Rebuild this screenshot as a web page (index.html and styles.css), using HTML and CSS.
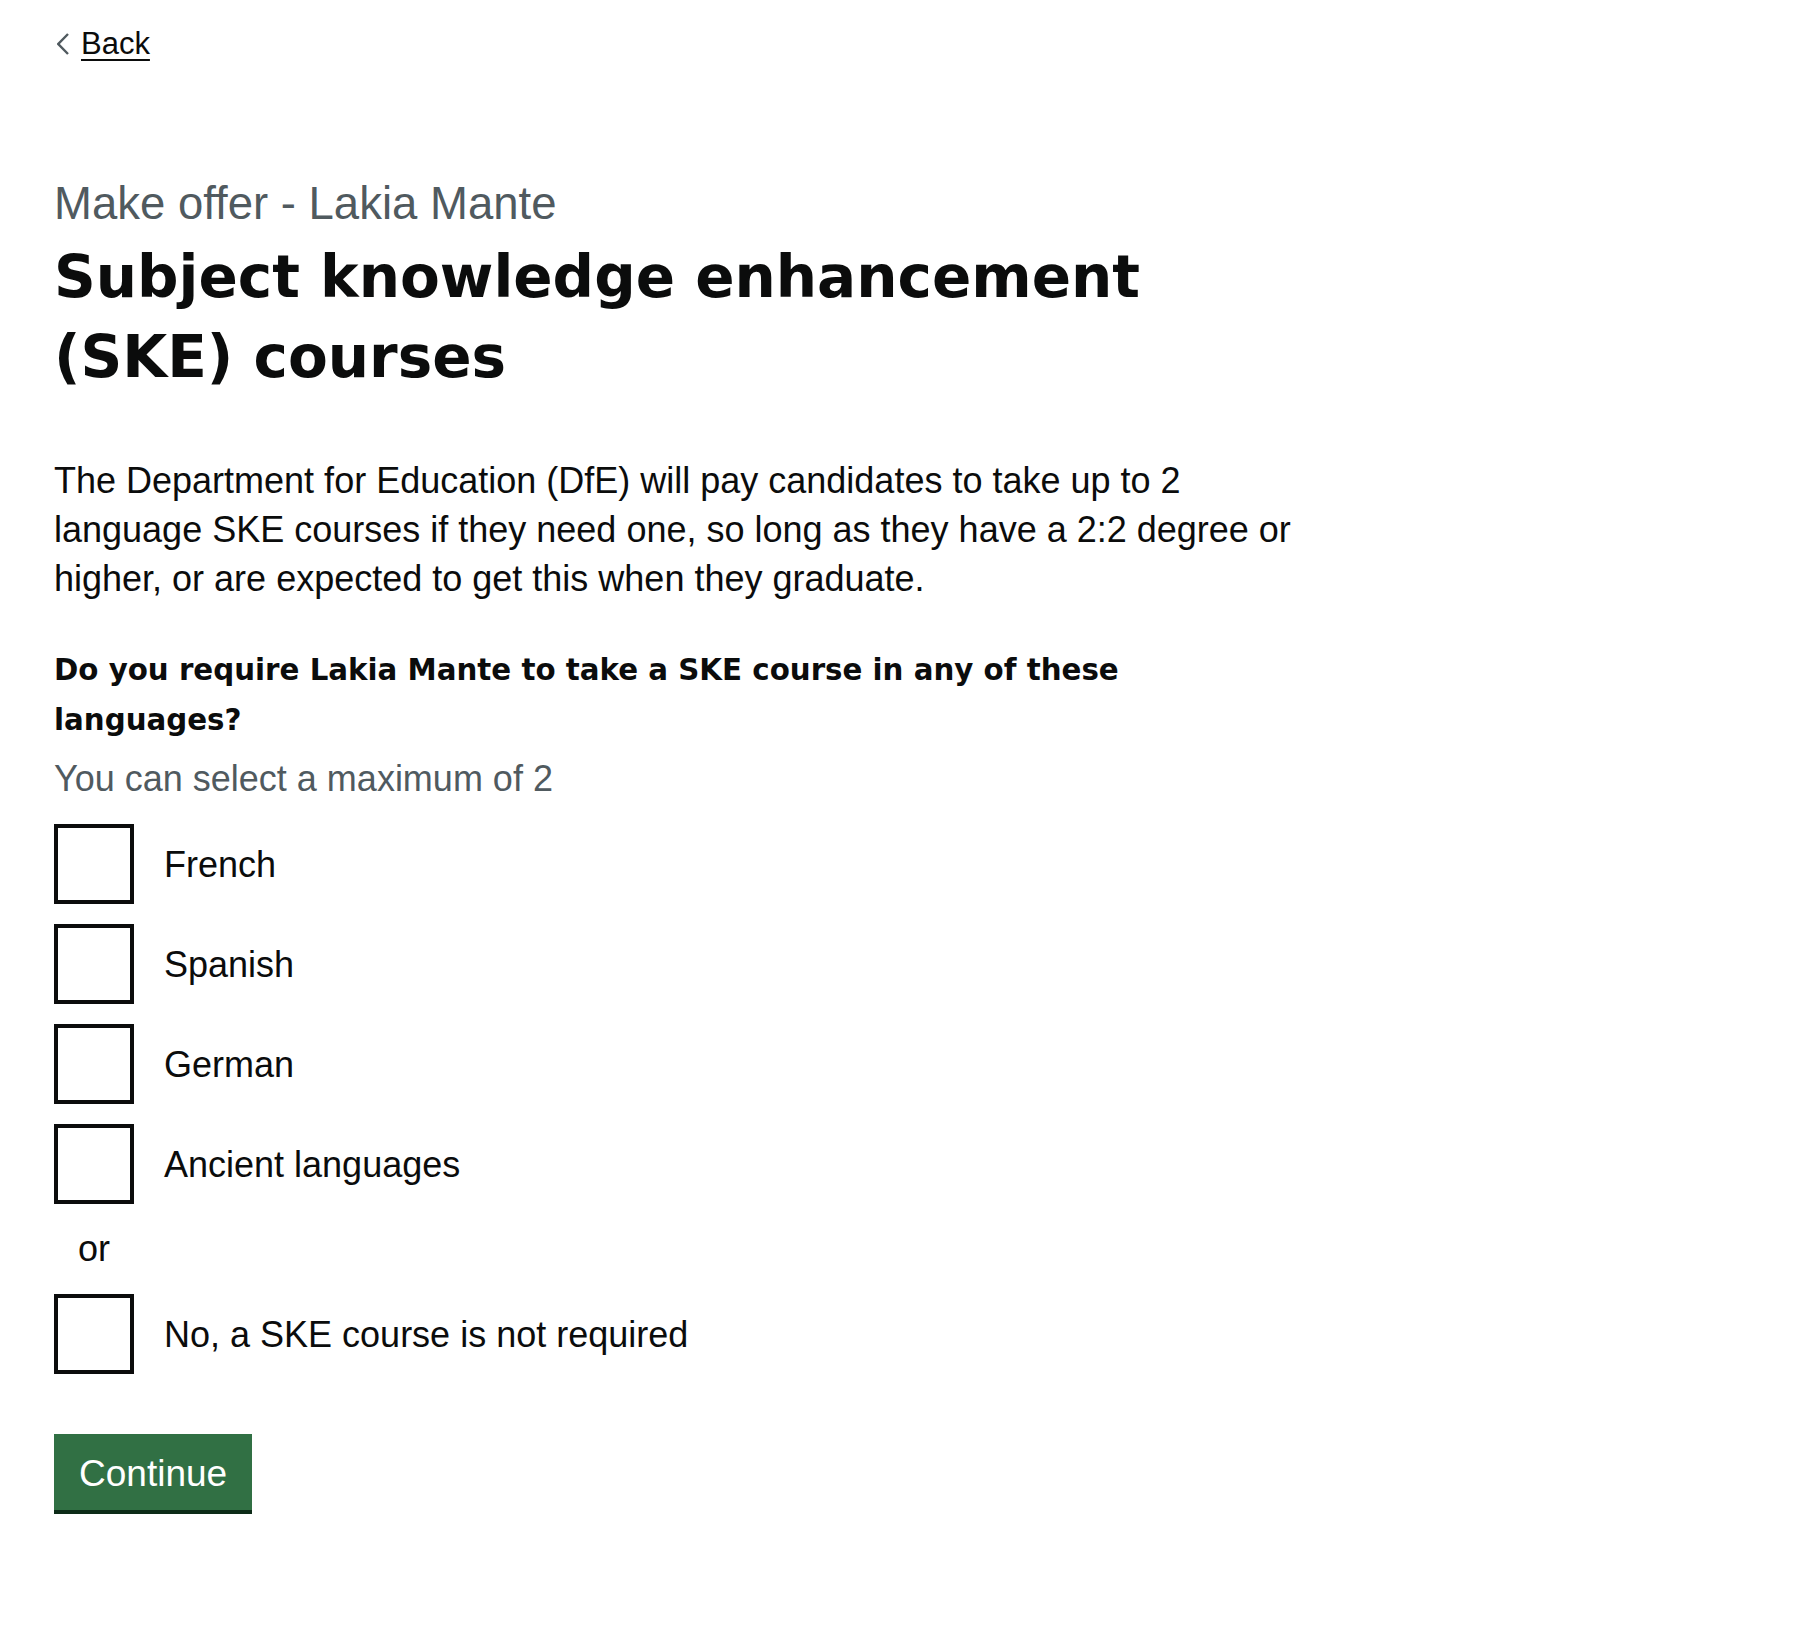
FILE: index.html
```html
<!DOCTYPE html>
<html lang="en">
<head>
<meta charset="utf-8">
<title>Subject knowledge enhancement (SKE) courses</title>
<link rel="stylesheet" href="styles.css">
</head>
<body>
<div class="page">
  <a class="back" href="#">
    <svg class="back__chev" width="12" height="22" viewBox="0 0 12 22" aria-hidden="true"><polyline points="11,1 1.3,11 11,21" fill="none" stroke="#505a5f" stroke-width="2.4"/></svg>
    <span class="back__text">Back</span>
  </a>
  <main class="main">
    <span class="caption">Make offer - Lakia Mante</span>
    <h1 class="heading">Subject knowledge enhancement (SKE) courses</h1>
    <p class="body">The Department for Education (DfE) will pay candidates to take up to 2 language SKE courses if they need one, so long as they have a 2:2 degree or higher, or are expected to get this when they graduate.</p>
    <form class="form" action="#">
      <fieldset class="fieldset">
        <legend class="legend">Do you require Lakia Mante to take a SKE course in any of these languages?</legend>
        <div class="hint">You can select a maximum of 2</div>
        <div class="checkboxes">
          <label class="item"><input class="box" type="checkbox" name="ske" value="french"><span class="label">French</span></label>
          <label class="item"><input class="box" type="checkbox" name="ske" value="spanish"><span class="label">Spanish</span></label>
          <label class="item"><input class="box" type="checkbox" name="ske" value="german"><span class="label">German</span></label>
          <label class="item"><input class="box" type="checkbox" name="ske" value="ancient"><span class="label">Ancient languages</span></label>
          <div class="divider">or</div>
          <label class="item item--last"><input class="box" type="checkbox" name="ske" value="none"><span class="label">No, a SKE course is not required</span></label>
        </div>
      </fieldset>
      <button class="button" type="submit">Continue</button>
    </form>
  </main>
</div>
</body>
</html>
```

FILE: styles.css
```css
* { box-sizing: border-box; }

html, body {
  margin: 0;
  padding: 0;
  background: #ffffff;
}

body {
  font-family: "Liberation Sans", Arial, sans-serif;
  color: #0b0c0c;
}

.page {
  padding: 24px 0 80px 54px;
}

.back {
  display: flex;
  width: max-content;
  align-items: center;
  height: 40px;
  color: #0b0c0c;
  text-decoration: none;
  font-size: 31px;
  line-height: 40px;
}

.back__chev {
  display: block;
  margin-left: 3px;
  margin-right: 12px;
  flex: none;
}

.back__text {
  text-decoration: underline;
  text-decoration-thickness: 2px;
  text-underline-offset: 5px;
}

.main {
  display: block;
}

.caption {
  display: block;
  margin-top: 115px;
  font-size: 45.5px;
  line-height: 50px;
  color: #505a5f;
}

.heading {
  margin: 8px 0 0;
  max-width: 1260px;
  font-family: "DejaVu Sans", "Liberation Sans", sans-serif;
  font-weight: 700;
  font-size: 58px;
  line-height: 80px;
  letter-spacing: 0;
}

.body {
  margin: 59px 0 0;
  max-width: 1260px;
  font-size: 36px;
  line-height: 49px;
}

.form {
  margin: 0;
}

.fieldset {
  margin: 42px 0 0;
  padding: 0;
  border: 0;
  min-width: 0;
}

.legend {
  padding: 0;
  max-width: 1150px;
  font-family: "DejaVu Sans", "Liberation Sans", sans-serif;
  font-weight: 700;
  font-size: 29.3px;
  line-height: 50px;
}

.hint {
  margin-top: 9px;
  font-size: 36px;
  line-height: 49px;
  color: #505a5f;
}

.checkboxes {
  margin-top: 21px;
  display: flex;
  flex-direction: column;
}

.item {
  display: flex;
  align-items: center;
  gap: 30px;
  height: 80px;
  margin-bottom: 20px;
  cursor: pointer;
}

.item--last {
  margin-bottom: 0;
}

.box {
  appearance: none;
  -webkit-appearance: none;
  margin: 0;
  width: 80px;
  height: 80px;
  flex: none;
  border: 4px solid #0b0c0c;
  background: #ffffff;
  border-radius: 0;
}

.label {
  font-size: 36px;
  line-height: 49px;
}

.divider {
  width: 80px;
  height: 50px;
  margin-bottom: 20px;
  text-align: center;
  font-size: 36px;
  line-height: 50px;
}

.button {
  display: flex;
  align-items: center;
  margin-top: 60px;
  height: 76px;
  padding: 2px 25px 0;
  border: 0;
  border-radius: 0;
  background: #317044;
  color: #ffffff;
  font-family: "Liberation Sans", Arial, sans-serif;
  font-size: 37px;
  line-height: 1;
  box-shadow: 0 4px 0 #0d2b18;
  cursor: pointer;
}
```
